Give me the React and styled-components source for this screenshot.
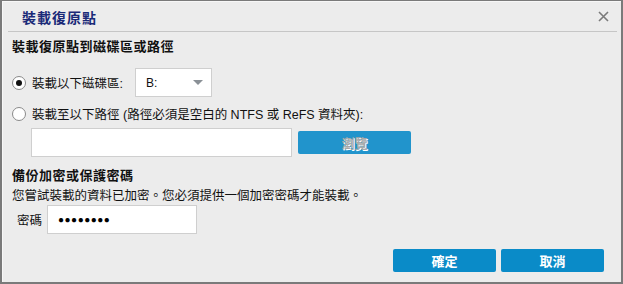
import React from 'react'
import styled, { createGlobalStyle } from 'styled-components'

const GlobalStyle = createGlobalStyle`
html, body {
  margin : 0;
  padding : 0;
  background : #7a7a7a;
  font-family : "Liberation Sans", "Noto Sans CJK TC", sans-serif;
}
`;

const Frame = styled.div`
width : 623px;
height : 284px;
padding : 1px 2px 2px 2px;
box-sizing : border-box;
`;

const Dialog = styled.div`
height : 100%;
background : #ececec;
border-left : 1px solid #f7f7f7;
border-top : 1px solid #f7f7f7;
box-sizing : border-box;
display : flex;
flex-direction : column;
`;

const TitleBar = styled.div`
display : flex;
justify-content : space-between;
align-items : center;
height : 29px;
padding : 0 8px 0 14px;
margin : 0 4px 0 5px;
border-bottom : 1px solid #c6c6c6;
`;

const Title = styled.span`
font-size : 14px;
font-weight : bold;
color : #1a2a78;
letter-spacing : 1px;
`;

const Close = styled.span`
width : 11px;
height : 11px;
display : flex;
`;

const Body = styled.div`
padding : 4px 10px 0 9px;
display : flex;
flex-direction : column;
flex : 1;
`;

const Heading = styled.div`
font-size : 13px;
font-weight : bold;
color : #111;
letter-spacing : 0.5px;
margin-top : ${p => p.$top || 0}px;
`;

const Row = styled.div`
display : flex;
align-items : center;
gap : ${p => p.$gap || 6}px;
margin-top : ${p => p.$top || 0}px;
padding-left : ${p => p.$left || 0}px;
`;

const Radio = styled.span`
width : 12px;
height : 12px;
border-radius : 50%;
border : 1px solid #8a8a8a;
background : #fff;
display : flex;
align-items : center;
justify-content : center;
&::after {
  content : '';
  width : 6px;
  height : 6px;
  border-radius : 50%;
  background : ${p => p.$on ? '#111' : 'transparent'};
}
`;

const Label = styled.span`
font-size : 12.5px;
color : #111;
`;

const Select = styled.div`
width : 77px;
height : 29px;
box-sizing : border-box;
border : 1px solid #cfcfcf;
background : #fff;
display : flex;
align-items : center;
justify-content : space-between;
padding : 0 8px 0 10px;
font-size : 12px;
color : #111;
margin-left : 6px;
`;

const Caret = styled.span`
width : 0;
height : 0;
border-left : 5px solid transparent;
border-right : 5px solid transparent;
border-top : 5px solid #8a9096;
`;

const TextBox = styled.div`
width : ${p => p.$w}px;
height : 29px;
box-sizing : border-box;
border : 1px solid #cfcfcf;
background : #fff;
display : flex;
align-items : center;
padding-left : 10px;
font-size : 10px;
letter-spacing : 0.5px;
color : #000;
`;

const Button = styled.div`
width : ${p => p.$w}px;
height : 23px;
border-radius : 2px;
background : ${p => p.$disabled ? '#2194cc' : '#0a8bc8'};
color : ${p => p.$disabled ? '#a8a8a8' : '#fff'};
text-shadow : ${p => p.$disabled ? '1px 1px 0 #fff' : 'none'};
font-size : 13px;
font-weight : bold;
display : flex;
align-items : center;
justify-content : center;
`;

const Desc = styled.div`
font-size : 12.5px;
color : #111;
margin-top : 1px;
`;

const Footer = styled.div`
display : flex;
justify-content : flex-end;
gap : 5px;
margin-top : 15px;
padding-right : 7px;
`;

export default function App() {
  return (
    <Frame>
      <GlobalStyle />
      <Dialog>
        <TitleBar>
          <Title>裝載復原點</Title>
          <Close>
            <svg width="11" height="11" viewBox="0 0 11 11">
              <path d="M1 1L10 10M10 1L1 10" stroke="#7a7a7a" strokeWidth="1.6" />
            </svg>
          </Close>
        </TitleBar>
        <Body>
          <Heading>裝載復原點到磁碟區或路徑</Heading>
          <Row $top={13}>
            <Radio $on />
            <Label>裝載以下磁碟區:</Label>
            <Select>B:<Caret /></Select>
          </Row>
          <Row $top={7}>
            <Radio />
            <Label>裝載至以下路徑 (路徑必須是空白的 NTFS 或 ReFS 資料夾):</Label>
          </Row>
          <Row $top={5} $left={19}>
            <TextBox $w={261} />
            <Button $w={113} $disabled>瀏覽</Button>
          </Row>
          <Heading $top={8}>備份加密或保護密碼</Heading>
          <Desc>您嘗試裝載的資料已加密。您必須提供一個加密密碼才能裝載。</Desc>
          <Row $top={1} $left={5} $gap={5}>
            <Label>密碼</Label>
            <TextBox $w={150}>●●●●●●●●</TextBox>
          </Row>
          <Footer>
            <Button $w={103}>確定</Button>
            <Button $w={103}>取消</Button>
          </Footer>
        </Body>
      </Dialog>
    </Frame>
  )
}
